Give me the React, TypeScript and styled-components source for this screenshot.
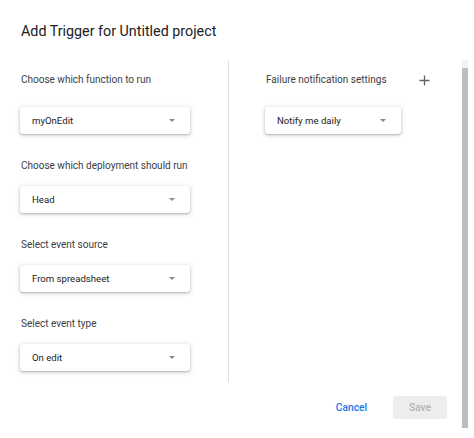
import React from "react";
import styled, { createGlobalStyle } from "styled-components";

const Global = createGlobalStyle`
  html, body { margin: 0; padding: 0; background: #ffffff; }
  body { font-family: Roboto, "Noto Sans", Arial, sans-serif; color: #202124; }
  * { box-sizing: border-box; }
`;

const Page = styled.div`
  width: 474px;
  height: 438px;
  display: flex;
  overflow: hidden;
  background: #fff;
`;

const Dialog = styled.div`
  flex: 1;
  display: flex;
  flex-direction: column;
`;

const Title = styled.h1`
  margin: 0;
  padding: 22px 0 0 21px;
  height: 60px;
  font-size: 14.3px;
  line-height: 18px;
  font-weight: 400;
  color: #202124;
`;

const Body = styled.div`
  display: flex;
`;

const Column = styled.div<{ $divider?: boolean }>`
  display: flex;
  flex-direction: column;
  width: ${(p) => (p.$divider ? "229px" : "auto")};
  flex: ${(p) => (p.$divider ? "none" : "1")};
  padding: 0 ${(p) => (p.$divider ? "0 11px 20px" : "32px 11px 36px")};
  border-right: ${(p) => (p.$divider ? "1px solid #e0e0e0" : "none")};
`;

const Section = styled.div<{ $first?: boolean }>`
  display: flex;
  flex-direction: column;
  margin-top: ${(p) => (p.$first ? "0" : "24px")};
`;

const LabelRow = styled.div<{ $tall?: boolean }>`
  display: flex;
  align-items: center;
  justify-content: space-between;
  height: ${(p) => (p.$tall ? "40px" : "16px")};
  margin-bottom: ${(p) => (p.$tall ? "7px" : "12px")};
`;

const Label = styled.span`
  font-size: 10px;
  line-height: 16px;
  color: #3c4043;
  padding-left: 1px;
  white-space: nowrap;
`;

const AddButton = styled.button`
  border: none;
  background: none;
  padding: 0;
  width: 11px;
  height: 11px;
  display: flex;
  align-items: center;
  justify-content: center;
  cursor: pointer;
`;

const Select = styled.div<{ $width: number }>`
  width: ${(p) => p.$width}px;
  height: 27px;
  display: flex;
  align-items: center;
  justify-content: space-between;
  padding: 0 15px 0 12px;
  background: #fff;
  border-radius: 3px;
  box-shadow: 0 1px 2px rgba(60, 64, 67, 0.3), 0 1px 4px 1px rgba(60, 64, 67, 0.15);
  font-size: 9.6px;
  color: #202124;
  white-space: nowrap;
`;

const Caret = styled.span`
  width: 0;
  height: 0;
  border-left: 3.5px solid transparent;
  border-right: 3.5px solid transparent;
  border-top: 3.5px solid #8a8a8a;
`;

const Footer = styled.div`
  display: flex;
  justify-content: flex-end;
  align-items: center;
  gap: 26px;
  padding: 14px 15px 0 0;
`;

const TextButton = styled.button`
  border: none;
  background: none;
  padding: 0;
  font-family: inherit;
  font-size: 10.2px;
  font-weight: 500;
  color: #1a73e8;
  cursor: pointer;
`;

const SaveButton = styled.button`
  border: none;
  width: 54px;
  height: 23px;
  border-radius: 3px;
  background: #ededed;
  color: #b4b4b4;
  font-family: inherit;
  font-size: 10.2px;
  font-weight: 500;
`;

const Scrollbar = styled.div`
  width: 12px;
  padding: 60px 6px 10px 0;
  display: flex;
  flex-direction: column;
`;

const ScrollTrack = styled.div`
  height: 8px;
  width: 6px;
  background: #f1f1f1;
`;

const ScrollThumb = styled.div`
  flex: 1;
  width: 6px;
  background: #bdbdbd;
`;

const Field = ({ label, value, width, first }: { label: string; value: string; width: number; first?: boolean }) => (
  <Section $first={first}>
    <LabelRow $tall={first}>
      <Label>{label}</Label>
    </LabelRow>
    <Select $width={width}>
      <span>{value}</span>
      <Caret />
    </Select>
  </Section>
);

export default function App() {
  return (
    <>
      <Global />
      <Page>
        <Dialog>
          <Title>Add Trigger for Untitled project</Title>
          <Body>
            <Column $divider>
              <Field first label="Choose which function to run" value="myOnEdit" width={170} />
              <Field label="Choose which deployment should run" value="Head" width={170} />
              <Field label="Select event source" value="From spreadsheet" width={170} />
              <Field label="Select event type" value="On edit" width={170} />
            </Column>
            <Column>
              <Section $first>
                <LabelRow $tall>
                  <Label>Failure notification settings</Label>
                  <AddButton aria-label="Add">
                    <svg width="11" height="11" viewBox="0 0 11 11">
                      <path d="M5.5 0.5v10M0.5 5.5h10" stroke="#5f6368" strokeWidth="1.3" />
                    </svg>
                  </AddButton>
                </LabelRow>
                <Select $width={136}>
                  <span>Notify me daily</span>
                  <Caret />
                </Select>
              </Section>
            </Column>
          </Body>
          <Footer>
            <TextButton>Cancel</TextButton>
            <SaveButton disabled>Save</SaveButton>
          </Footer>
        </Dialog>
        <Scrollbar>
          <ScrollTrack />
          <ScrollThumb />
        </Scrollbar>
      </Page>
    </>
  );
}
